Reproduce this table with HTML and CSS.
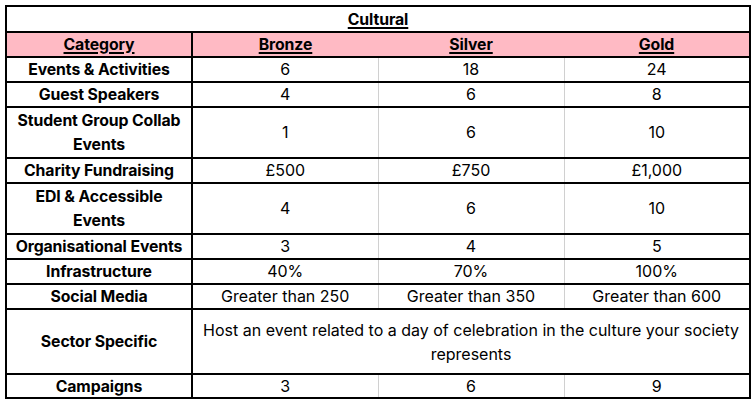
FILE: index.html
```html
<!DOCTYPE html>
<html lang="en">
<head>
<meta charset="utf-8">
<title>Cultural</title>
<link rel="stylesheet" href="styles.css">
</head>
<body>
<table class="grid">
  <colgroup>
    <col class="c1"><col class="c2"><col class="c3"><col class="c4">
  </colgroup>
  <tr class="r-title"><th colspan="4" class="title"><u>Cultural</u></th></tr>
  <tr class="r-head">
    <th class="cat"><u>Category</u></th>
    <th class="lvl"><u>Bronze</u></th>
    <th class="lvl"><u>Silver</u></th>
    <th class="lvl"><u>Gold</u></th>
  </tr>
  <tr class="r1"><th>Events &amp; Activities</th><td>6</td><td class="g">18</td><td class="g">24</td></tr>
  <tr class="r1"><th>Guest Speakers</th><td>4</td><td class="g">6</td><td class="g">8</td></tr>
  <tr class="r2"><th class="two">Student Group Collab Events</th><td>1</td><td class="g">6</td><td class="g">10</td></tr>
  <tr class="r1"><th>Charity Fundraising</th><td>£500</td><td class="g">£750</td><td class="g">£1,000</td></tr>
  <tr class="r2"><th class="two">EDI &amp; Accessible Events</th><td>4</td><td class="g">6</td><td class="g">10</td></tr>
  <tr class="r1"><th>Organisational Events</th><td>3</td><td class="g">4</td><td class="g">5</td></tr>
  <tr class="r1"><th>Infrastructure</th><td>40%</td><td class="g">70%</td><td class="g">100%</td></tr>
  <tr class="r1"><th>Social Media</th><td>Greater than 250</td><td class="g">Greater than 350</td><td class="g">Greater than 600</td></tr>
  <tr class="r3"><th>Sector Specific</th><td colspan="3" class="wide">Host an event related to a day of celebration in the culture your society represents</td></tr>
  <tr class="r0"><th>Campaigns</th><td>3</td><td class="g">6</td><td class="g">9</td></tr>
</table>
</body>
</html>
```
FILE: styles.css
```css
html, body {
  margin: 0;
  background: #ffffff;
}
body {
  padding: 5px;
  font-family: "Inter", "Open Sans", sans-serif;
  color: #000000;
}
.grid {
  border-collapse: collapse;
  table-layout: fixed;
  width: 746px;
  border: 2px solid #000;
}
.c1, .c2, .c3, .c4 { width: 186px; }
.grid th, .grid td {
  border-top: 2px solid #000;
  border-bottom: 2px solid #000;
  padding: 0 4px;
  text-align: center;
  vertical-align: middle;
  overflow: hidden;
  line-height: 21px;
}
.grid th {
  font-size: 15.8px;
  font-weight: 700;
  border-right: 2px solid #000;
  letter-spacing: -0.1px;
}
.grid th.two { line-height: 24px; }
.grid td {
  font-size: 16px;
  font-weight: 400;
}
.grid td.wide { line-height: 24px; padding: 0 6px; }
.grid td.g { border-left: 1px solid #d0d0d0; }
.grid .title { border-right: none; }
.r-head th { background: #ffbac4; }
.r-head th.lvl { border-right: none; }
u { text-decoration-thickness: 1.5px; text-underline-offset: 2px; }
.r-title { height: 26px; }
.r-head { height: 25px; }
.r1 { height: 25px; }
.r2 { height: 51px; }
.r3 { height: 65px; }
.r0 { height: 24px; }
```
